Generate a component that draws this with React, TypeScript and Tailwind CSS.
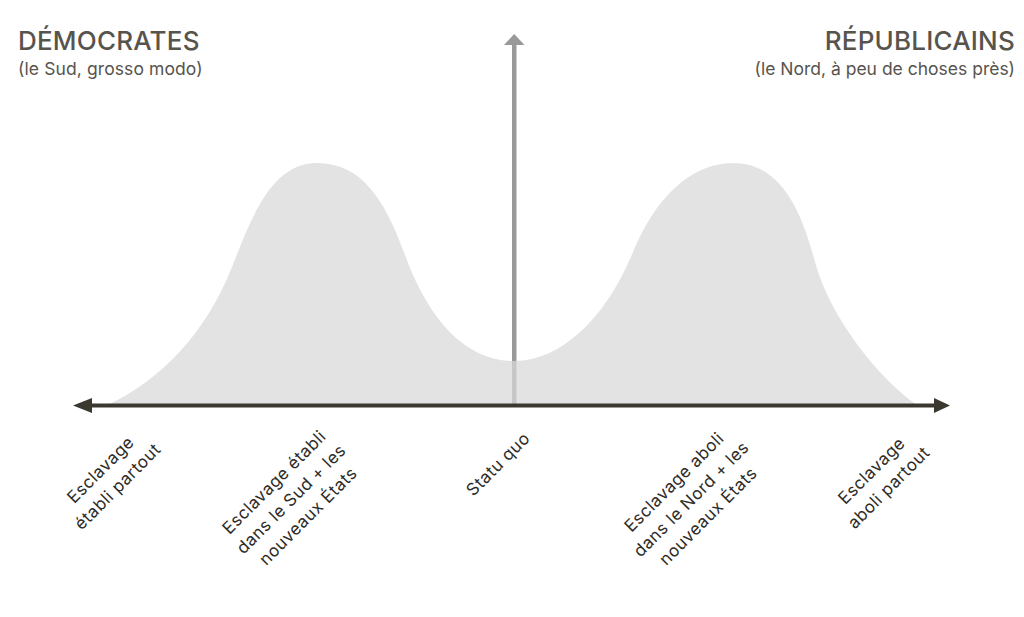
import React from 'react';

// two bumps of opinion, drawn as one filled curve over the axis
const CURVE =
  'M108,405 C160,380 205,335 232,267 C250,222 270,163 317,163 ' +
  'C362,163 385,200 405,255 C425,310 460,361 514,361 ' +
  'C560,361 605,320 633,252 C655,199 690,163 733,163 ' +
  'C778,163 800,205 815,262 C830,318 880,380 917,405 Z';

interface AxisLabel {
  x: number;
  y: number;
  lines: string[];
}

const labels: AxisLabel[] = [
  { x: 109, y: 478, lines: ['Esclavage', 'établi partout'] },
  { x: 291, y: 499, lines: ['Esclavage établi', 'dans le Sud + les', 'nouveaux États'] },
  { x: 498, y: 464, lines: ['Statu quo'] },
  { x: 691, y: 499, lines: ['Esclavage aboli', 'dans le Nord + les', 'nouveaux États'] },
  { x: 880, y: 479, lines: ['Esclavage', 'aboli partout'] },
];

const LINE_H = 24;

const Chart: React.FC = () => (
  <svg
    className="absolute inset-0"
    width={1024}
    height={617}
    viewBox="0 0 1024 617"
  >
    {/* vertical axis */}
    <rect x={512} y={43} width={4.5} height={362} fill="#999999" />
    <path d="M514.2,34 L504,45 L524.5,45 Z" fill="#999999" />

    <path d={CURVE} fill="#d8d8d8" fillOpacity={0.72} />

    {/* horizontal axis */}
    <rect x={88} y={403.5} width={850} height={4} fill="#3b3830" />
    <path d="M73,405.5 L92,398 L92,413 Z" fill="#3b3830" />
    <path d="M950,405.5 L934,398 L934,413 Z" fill="#3b3830" />

    {labels.map(l => (
      <text
        key={l.lines[0] + l.x}
        transform={`translate(${l.x} ${l.y}) rotate(-45)`}
        textAnchor="middle"
        dominantBaseline="central"
        fill="#2f2d28"
        fontSize={17}
        letterSpacing={0.5}
        fontFamily="Inter, 'Open Sans', sans-serif"
      >
        {l.lines.map((line, i) => (
          <tspan key={i} x={0} y={(i - (l.lines.length - 1) / 2) * LINE_H}>
            {line}
          </tspan>
        ))}
      </text>
    ))}
  </svg>
);

export default function App() {
  return (
    <div className="relative h-[617px] w-[1024px] overflow-hidden bg-white font-['Inter',_'Open_Sans',_sans-serif] text-[#57544e]">
      <Chart />
      <header className="relative flex justify-between pl-[18px] pr-[9px] pt-[24px]">
        <div>
          <h1 className="text-[26px] leading-[34px] font-medium tracking-[0.2px]">DÉMOCRATES</h1>
          <p className="text-[17.5px] leading-[22px] tracking-[0.1px]">(le Sud, grosso modo)</p>
        </div>
        <div className="text-right">
          <h1 className="text-[26px] leading-[34px] font-medium tracking-[0.2px]">RÉPUBLICAINS</h1>
          <p className="text-[17.5px] leading-[22px]">(le Nord, à peu de choses près)</p>
        </div>
      </header>
    </div>
  );
}
